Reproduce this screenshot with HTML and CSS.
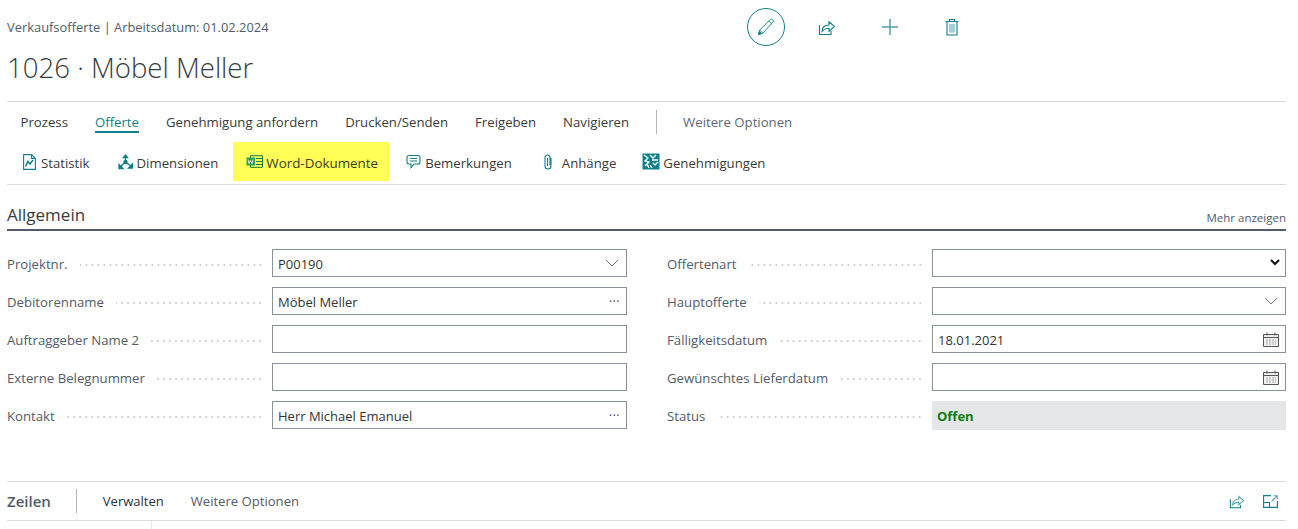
FILE: index.html
```html
<!DOCTYPE html>
<html lang="de">
<head>
<meta charset="utf-8">
<title>Verkaufsofferte</title>
<link rel="stylesheet" href="styles.css">
</head>
<body>
<div class="page">
  <header class="head">
    <div class="head-text">
      <div class="caption">Verkaufsofferte | Arbeitsdatum: 01.02.2024</div>
      <h1 class="title">1026 · Möbel Meller</h1>
    </div>
    <div class="head-actions">
      <button class="round-btn"><svg width="20" height="20" viewBox="0 0 20 20" fill="none" stroke="#0f7f8a" stroke-width=".9"><path d="M2.500 17.500l1.200-4.500L14 2.800c.8-.8 2-.8 2.700-.1s.7 1.900-.1 2.700L6.800 16.200z"/><path d="M12.800 4l3.200 3.200M3.700 13l3.100 3.200"/><path d="M2.500 17.500l.9-3 2.100 2z" fill="#0f7f8a"/></svg></button>
      <span class="head-icon i1"><svg width="18" height="18" viewBox="0 0 18 18" fill="none" stroke="#0f7f8a" stroke-width="1.100"><path d="M1.500 7v9.500h11.500v-3.500"/><path d="M4 13.500c0-4 2.500-6.500 7-6.500V3.800l5.500 4.700-5.500 4.700v-3c-3 0-5 .8-7 3.300z"/></svg></span>
      <span class="head-icon i2"><svg width="18" height="18" viewBox="0 0 18 18" stroke="#4f9fa7" stroke-width="1.500"><path d="M9 1v16M1 9h16"/></svg></span>
      <span class="head-icon i3"><svg width="16" height="18" viewBox="0 0 16 18" fill="none" stroke="#0f7f8a" stroke-width="1.100"><path d="M1.500 3.500h13M3 3.500v13.500h10V3.500M5.500 3.500V1.500h5v2"/><path d="M6 6v8.500M8 6v8.500M10 6v8.500" stroke="#5ba9b0"/></svg></span>
    </div>
  </header>

  <nav class="actionbar">
    <div class="tabs">
      <span class="tab">Prozess</span>
      <span class="tab active">Offerte</span>
      <span class="tab">Genehmigung anfordern</span>
      <span class="tab">Drucken/Senden</span>
      <span class="tab">Freigeben</span>
      <span class="tab">Navigieren</span>
      <span class="tab-sep"></span>
      <span class="tab more">Weitere Optionen</span>
    </div>
    <div class="tools">
      <span class="tool t-stat"><svg width="13" height="16" viewBox="0 0 13 16" fill="none" stroke="#0f7f8a" stroke-width="1.100"><path d="M.6.600h8l3.800 3.800v11H.6z"/><path d="M8.600.600v3.800h3.800"/><path d="M2.500 12.500l2.500-5 2 2.500 3-4" stroke-width="1.500"/></svg><span>Statistik</span></span>
      <span class="tool t-dim"><svg width="15" height="16" viewBox="0 0 15 16" fill="none" stroke="#0f7f8a" stroke-width="1.300"><path d="M7.500 8V2M7.500 8L2 13M7.500 8l5.500 4"/><path d="M5.500 3.500l2-2.500 2 2.500z" fill="#0f7f8a"/><path d="M1 10.500v4h4zM14.500 10v4h-4z" fill="#0f7f8a"/><circle cx="7.500" cy="8" r="1.500" fill="#0f7f8a"/></svg><span>Dimensionen</span></span>
      <span class="tool mark"><svg width="17" height="13" viewBox="0 0 17 13" fill="none"><path d="M4.500.7h12v11.600h-12z" stroke="#107c41"/><path d="M10 3.500h6M10 6.500h6M10 9.500h6" stroke="#107c41"/><rect x=".5" y="2.500" width="8.500" height="8" fill="#2e9e4f"/><path d="M2 4.500l1 4 1.500-3 1.500 3 1-4" stroke="#fff" stroke-width=".8"/></svg><span>Word-Dokumente</span></span>
      <span class="tool t-rem"><svg width="15" height="16" viewBox="0 0 15 16" fill="none" stroke="#0f7f8a" stroke-width="1.100"><path d="M3 1.500h9c1 0 2 1 2 2v4.500c0 1-1 2-2 2H8l-3 3.500v-3.500H3c-1 0-2-1-2-2V3.500c0-1 1-2 2-2z"/><path d="M4 4.500h7M4 7h7"/></svg><span>Bemerkungen</span></span>
      <span class="tool t-att"><svg width="10" height="16" viewBox="0 0 10 16" fill="none" stroke="#0f7f8a" stroke-width="1.100"><path d="M8 4v8c0 1.500-1.200 3-3 3s-3-1.500-3-3V3.500C2 2.200 3.100 1 4.500 1S7 2.200 7 3.500V11"/><path d="M4.500 4v8"/></svg><span>Anhänge</span></span>
      <span class="tool t-app"><svg width="18" height="17" viewBox="0 0 18 17"><rect x=".5" y=".5" width="17" height="16" fill="#0f7f8a"/><path d="M2 2l4 3-3 3 4 1-4 4M8 2l3 3 3-3M10 7h6M11 10l2 2 3-3M8 12l2 3M5 11l2 4" stroke="#fff" stroke-width="1.300" fill="none"/></svg><span>Genehmigungen</span></span>
    </div>
  </nav>

  <section class="general">
    <div class="section-head">
      <h2 class="section-title">Allgemein</h2>
      <span class="show-more">Mehr anzeigen</span>
    </div>
    <div class="form">
      <div class="field"><span class="label">Projektnr.</span><span class="leader"></span>
        <div class="input">P00190<svg class="chev" width="14" height="8" viewBox="0 0 14 8" fill="none" stroke="#7a7a7a"><path d="M1 1l6 6 6-6"/></svg></div></div>
      <div class="field"><span class="label">Offertenart</span><span class="leader"></span>
        <div class="input"><svg class="chev-bold" width="10" height="7" viewBox="0 0 10 7" fill="none" stroke="#111" stroke-width="2"><path d="M1 1l4 4 4-4"/></svg></div></div>

      <div class="field"><span class="label">Debitorenname</span><span class="leader"></span>
        <div class="input">Möbel Meller<span class="dots">···</span></div></div>
      <div class="field"><span class="label">Hauptofferte</span><span class="leader"></span>
        <div class="input"><svg class="chev" width="14" height="8" viewBox="0 0 14 8" fill="none" stroke="#7a7a7a"><path d="M1 1l6 6 6-6"/></svg></div></div>

      <div class="field"><span class="label">Auftraggeber Name 2</span><span class="leader"></span><div class="input"></div></div>
      <div class="field"><span class="label">Fälligkeitsdatum</span><span class="leader"></span>
        <div class="input">18.01.2021<svg class="cal" width="16" height="15" viewBox="0 0 16 15" fill="#f1f1f1" stroke="#555"><path d="M.5 2.500h15v12H.5z"/><path d="M.5 5.500h15" /><path d="M4 .5v3M12 .5v3"/><path d="M3 8h10M3 10h10M3 12h10" stroke="#aaa" stroke-dasharray="2 1"/></svg></div></div>

      <div class="field"><span class="label">Externe Belegnummer</span><span class="leader"></span><div class="input"></div></div>
      <div class="field"><span class="label">Gewünschtes Lieferdatum</span><span class="leader"></span>
        <div class="input"><svg class="cal" width="16" height="15" viewBox="0 0 16 15" fill="#f1f1f1" stroke="#555"><path d="M.5 2.500h15v12H.5z"/><path d="M.5 5.500h15"/><path d="M4 .5v3M12 .5v3"/><path d="M3 8h10M3 10h10M3 12h10" stroke="#aaa" stroke-dasharray="2 1"/></svg></div></div>

      <div class="field"><span class="label">Kontakt</span><span class="leader"></span>
        <div class="input">Herr Michael Emanuel<span class="dots">···</span></div></div>
      <div class="field"><span class="label">Status</span><span class="leader"></span>
        <div class="status">Offen</div></div>
    </div>
  </section>

  <section class="lines">
    <span class="lines-title">Zeilen</span>
    <span class="lines-sep"></span>
    <span class="lines-link dark">Verwalten</span>
    <span class="lines-link">Weitere Optionen</span>
    <span class="lines-icons">
      <svg width="16" height="15" viewBox="0 0 18 17" fill="none" stroke="#0f7f8a" stroke-width="1.200"><path d="M1.500 6v9.500h11.500v-3"/><path d="M4 12.500c0-4 2.500-6.500 7-6.500V2.800l5.500 4.700-5.500 4.700v-3c-3 0-5 .8-7 3.300z" stroke="#5ba9b0"/></svg>
      <svg width="15" height="13" viewBox="0 0 15 13" fill="none" stroke="#0f7f8a" stroke-width="1.100"><path d="M8 .6H.6v11.800h13.800V6"/><path d="M.6 7.500H6.500v4.900"/><path d="M9 6l5-5M10.500.8h3.800v3.800" stroke="#5ba9b0"/></svg>
    </span>
  </section>
  <div class="stub"></div>
</div>
</body>
</html>
```

FILE: styles.css
```css
* { box-sizing: border-box; }
html, body { margin: 0; padding: 0; background: #fff; overflow: hidden; }
body { font-family: "Open Sans", "Noto Sans", sans-serif; color: #3a3a3a; font-size: 13px; }
.page { width: 1298px; height: 529px; padding: 0 12px 0 7px; overflow: hidden; }

.head { display: flex; height: 101px; }
.head-text { width: 740px; flex: none; padding-top: 18px; }
.caption { font-size: 12.900px; line-height: 18px; color: #505c6a; }
.title { margin: 12px 0 0; font-size: 27.600px; line-height: 38px; font-weight: 300; color: #383c40; }
.head-actions { display: flex; align-items: center; height: 54px; }
.round-btn { width: 38px; height: 38px; border: 1.500px solid #0f7f8a; border-radius: 50%; background: #fff; padding: 0; display: flex; align-items: center; justify-content: center; }
.head-icon { display: flex; }
.i1 { margin-left: 33px; }
.i2 { margin-left: 45px; }
.i3 { margin-left: 45px; }

.actionbar { border-top: 1px solid #d9d9db; border-bottom: 1px solid #d9d9db; height: 84px; }
.tabs { display: flex; align-items: center; height: 40px; padding-left: 13.500px; }
.tab { font-size: 13.200px; line-height: 18px; color: #3a3a3a; margin-right: 27px; position: relative; white-space: nowrap; }
.tab.active { color: #0f7f8a; }
.tab.active::after { content: ""; position: absolute; left: 0; right: 0; bottom: -2px; height: 2px; background: #0f7f8a; }
.tab-sep { width: 1px; height: 24px; background: #aeb4ba; margin: 0 26px 0 0; }
.tab.more { color: #5c6876; margin-right: 0; }
.tools { display: flex; align-items: stretch; height: 39px; }
.tool { display: flex; align-items: center; gap: 5px; font-size: 13.200px; color: #3a3a3a; white-space: nowrap; }
.tool span { padding-top: 2px; }
.t-stat { margin-left: 16px; }
.t-dim { margin-left: 28px; gap: 4px; }
.mark { background: #ffff57; margin-left: 15px; padding: 0 11px 0 13px; gap: 3px; color: #3b3b1e; font-size: 13.400px; }
.t-rem { margin-left: 17px; gap: 4px; }
.t-att { margin-left: 31px; gap: 9px; }
.t-app { margin-left: 26px; gap: 3px; }

.general { padding-top: 21px; }
.section-head { display: flex; justify-content: space-between; align-items: flex-end; height: 25px; border-bottom: 2px solid #505c6a; padding-bottom: 3px; }
.section-title { margin: 0; font-size: 17px; line-height: 22px; font-weight: 500; color: #383c40; }
.show-more { font-size: 11.500px; line-height: 16px; color: #505c6a; }
.form { display: grid; grid-template-columns: 620px 619px; column-gap: 40px; row-gap: 10px; padding-top: 18px; }
.field { display: flex; align-items: center; height: 28px; }
.label { font-size: 13.200px; color: #505c6a; white-space: nowrap; padding-top: 2px; }
.leader { flex: 1; height: 2px; margin: 3px 9px 0 12px; background-image: radial-gradient(circle, #cfd2d6 .7px, transparent .9px); background-size: 6px 2px; background-repeat: repeat-x; background-position: right; }
.input { position: relative; flex: none; width: 355px; height: 28px; border: 1px solid #8a9299; background: #fff; padding: 1px 0 0 5px; font-size: 13px; line-height: 26px; color: #333; }
.field:nth-child(even) .input, .status { width: 354px; }
.status { flex: none; height: 29px; background: #e5e6e7; padding-left: 5px; font-size: 13px; font-weight: 700; line-height: 31px; color: #107c10; }
.chev { position: absolute; right: 7px; top: 9px; }
.chev-bold { position: absolute; right: 5px; top: 9px; }
.dots { position: absolute; right: 6px; top: 0; font-size: 13px; font-weight: 400; color: #555; letter-spacing: .3px; }
.cal { position: absolute; right: 6px; top: 6px; }

.lines { display: flex; align-items: center; height: 40px; margin-top: 52px; border-top: 1px solid #d9d9e0; border-bottom: 1px solid #d9d9e0; }
.lines-title { font-size: 15px; font-weight: 600; color: #505c6a; }
.lines-sep { width: 1px; height: 24px; background: #aeb4ba; margin: 0 26px 0 25px; }
.lines-link { font-size: 13.100px; color: #505c6a; margin-right: 27px; }
.lines-link.dark { color: #283040; font-size: 13px; }
.lines-icons { margin-left: auto; display: flex; align-items: center; gap: 18px; padding-right: 8px; }
.stub { width: 1px; height: 9px; margin-left: 144px; background: #e8e8e8; }
```
